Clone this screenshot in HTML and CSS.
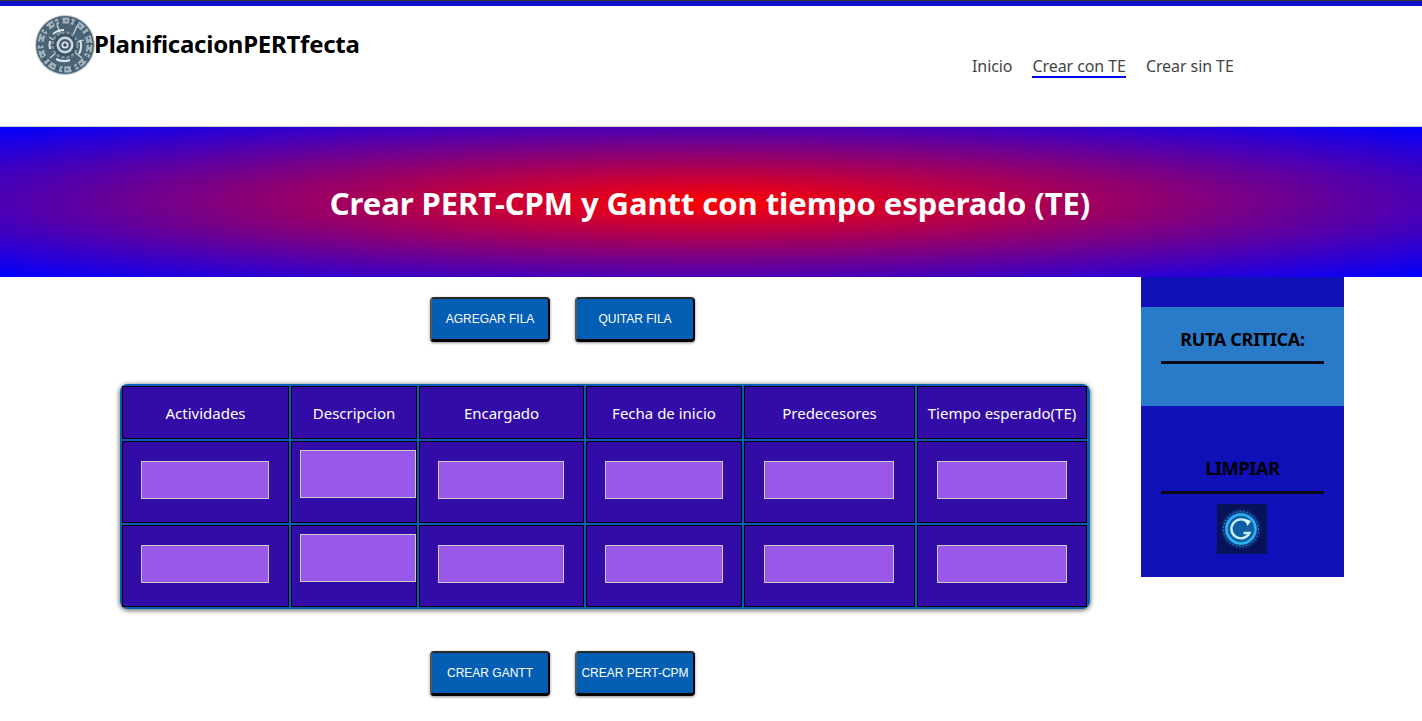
FILE: index.html
```html
<!DOCTYPE html>
<html lang="es">

<head>
    <meta charset="UTF-8">
    <meta name="viewport" content="width=device-width, initial-scale=1.0">
    <title>PlanificacionPERTfecta</title>
    <link rel="stylesheet" href="styles.css">
</head>

<body>
    <header class="site-header">
        <div class="brand">
            <svg class="brand-logo" viewBox="0 0 60 60" aria-hidden="true">
                <circle cx="30" cy="30" r="30" fill="#c3ced5"/>
                <circle cx="30" cy="30" r="29" fill="#4a6375"/>
                <circle cx="30" cy="30" r="24.5" fill="none" stroke="#9fb0bb" stroke-width="6" stroke-dasharray="7 2 3 4"/>
                <circle cx="30" cy="30" r="24.5" fill="none" stroke="#34505f" stroke-width="1.2" stroke-dasharray="2 3"/>
                <path d="M14 22l8 5M22 10l4 10M42 11l-4 9M49 25l-10 3M47 43l-9-7M15 43l8-7" stroke="#c9d4da" stroke-width="1.3" fill="none"/>
                <path d="M18 19a17 17 0 0 1 11-4M45 25a17 17 0 0 1-1 14M21 44a17 17 0 0 0 14 1M15 34a16 16 0 0 1 0-8" stroke="#dfe6ea" stroke-width="2" fill="none"/>
                <circle cx="30" cy="30" r="12.5" fill="#3c5364" stroke="#7f929f" stroke-width="2.5" stroke-dasharray="3 2"/>
                <circle cx="30" cy="30" r="8.5" fill="#cbd5da"/>
                <circle cx="30" cy="30" r="6" fill="#465e6f"/>
                <circle cx="30" cy="30" r="3.5" fill="#dfe5e8"/>
                <circle cx="30" cy="30" r="1.8" fill="#2f4454"/>
            </svg>
            <span class="brand-name">PlanificacionPERTfecta</span>
        </div>
        <nav class="main-nav">
            <a href="#">Inicio</a>
            <a href="#" class="active">Crear con TE</a>
            <a href="#">Crear sin TE</a>
        </nav>
    </header>

    <section class="banner">
        <h1>Crear PERT-CPM y Gantt con tiempo esperado (TE)</h1>
    </section>

    <div class="content">
        <main class="main-col">
            <div class="actions actions-top">
                <button class="btn">AGREGAR FILA</button>
                <button class="btn">QUITAR FILA</button>
            </div>

            <table class="pert-table">
                <colgroup>
                    <col class="col-act">
                    <col class="col-desc">
                    <col class="col-enc">
                    <col class="col-fecha">
                    <col class="col-pred">
                    <col class="col-te">
                </colgroup>
                <thead>
                    <tr>
                        <th>Actividades</th>
                        <th>Descripcion</th>
                        <th>Encargado</th>
                        <th>Fecha de inicio</th>
                        <th>Predecesores</th>
                        <th>Tiempo esperado(TE)</th>
                    </tr>
                </thead>
                <tbody>
                    <tr>
                        <td><input type="text" class="cell-input w-act"></td>
                        <td class="desc-cell"><textarea class="cell-area"></textarea></td>
                        <td><input type="text" class="cell-input w-enc"></td>
                        <td><input type="text" class="cell-input w-fecha"></td>
                        <td><input type="text" class="cell-input w-pred"></td>
                        <td><input type="text" class="cell-input w-te"></td>
                    </tr>
                    <tr>
                        <td><input type="text" class="cell-input w-act"></td>
                        <td class="desc-cell"><textarea class="cell-area"></textarea></td>
                        <td><input type="text" class="cell-input w-enc"></td>
                        <td><input type="text" class="cell-input w-fecha"></td>
                        <td><input type="text" class="cell-input w-pred"></td>
                        <td><input type="text" class="cell-input w-te"></td>
                    </tr>
                </tbody>
            </table>

            <div class="actions actions-bottom">
                <button class="btn">CREAR GANTT</button>
                <button class="btn">CREAR PERT-CPM</button>
            </div>
        </main>

        <aside class="side">
            <div class="side-block side-route">
                <h3>RUTA CRITICA:</h3>
                <hr>
            </div>
            <div class="side-block side-clear">
                <h3>LIMPIAR</h3>
                <hr>
                <svg class="clear-icon" viewBox="0 0 50 50" aria-hidden="true">
                    <defs>
                        <radialGradient id="glow">
                            <stop offset="0" stop-color="#0f6fb8"/>
                            <stop offset="0.7" stop-color="#0c4f9c"/>
                            <stop offset="1" stop-color="#07125a"/>
                        </radialGradient>
                    </defs>
                    <rect width="50" height="50" fill="#07125a"/>
                    <circle cx="24" cy="25" r="21" fill="url(#glow)"/>
                    <circle cx="24" cy="25" r="17.5" fill="none" stroke="#8fc0df" stroke-width="0.8" stroke-dasharray="1 2.5"/>
                    <circle cx="24" cy="25" r="14.5" fill="#0e5fa4" stroke="#2db4f0" stroke-width="2.5"/>
                    <path d="M31 18.5a9.5 9.5 0 1 0 1.5 10.5h-6" fill="none" stroke="#c8effc" stroke-width="2.4"/>
                    <path d="M27 14.5l7 2.5-3.5 5z" fill="#e4f8ff"/>
                </svg>
            </div>
        </aside>
    </div>
</body>

</html>
```

FILE: styles.css
```css
/* PlanificacionPERTfecta */
body {
    margin: 0;
    background-color: white;
    color: black;
    font-family: "Noto Sans", "Open Sans", sans-serif;
}

.site-header {
    display: flex;
    height: 120px;
    border-top: 1px solid #333;
    border-bottom: 1px solid #ccc;
    box-shadow: inset 0 5px 0 #1010c4;
    padding-bottom: 5px;
}

.brand {
    display: flex;
    align-items: flex-start;
    width: 970px;
    padding: 14px 0 0 35px;
    box-sizing: border-box;
}

.brand-logo {
    width: 60px;
    height: 60px;
    flex: none;
}

.brand-name {
    font-size: 24px;
    font-weight: bold;
    line-height: 32px;
    letter-spacing: -0.26px;
    margin: 13px 0 0 -1px;
}

.main-nav {
    display: flex;
    align-items: flex-start;
    gap: 20px;
    padding: 54px 0 0 2px;
}

.main-nav a {
    color: #444;
    font-size: 16px;
    line-height: 22px;
    letter-spacing: -0.08px;
    text-decoration: none;
    border-bottom: 2px solid transparent;
    height: 21px;
}

.main-nav a.active {
    border-bottom-color: #0000ee;
}

.banner {
    display: flex;
    align-items: center;
    justify-content: center;
    height: 150px;
    padding-right: 2px;
    box-sizing: border-box;
    background: radial-gradient(ellipse at center, #ff0000, #0000ff);
    color: white;
}

.banner h1 {
    margin: 2px 0 0;
    font-size: 31px;
    font-weight: bold;
    letter-spacing: -0.06px;
}

.content {
    display: flex;
}

.main-col {
    width: 1141px;
    flex: none;
}

.actions {
    display: flex;
    gap: 25px;
    padding-left: 430px;
}

.actions-top {
    padding-top: 20px;
}

.actions-bottom {
    padding-top: 42px;
    padding-bottom: 25px;
}

.btn {
    width: 120px;
    height: 45px;
    padding: 0 0 1px;
    box-sizing: border-box;
    background-color: #045fb4;
    color: white;
    border-style: solid;
    border-width: 2px 2px 3px 2px;
    border-color: #2a2a2a #000 #000 #555;
    border-radius: 4px;
    box-shadow: 0 1px 3px rgba(0, 0, 0, 0.45);
    font-family: "Liberation Sans", Arial, sans-serif;
    font-size: 12px;
    cursor: pointer;
}

.pert-table {
    width: 970px;
    margin: 42px 0 0 120px;
    padding: 0 1px 0 0;
    border-collapse: separate;
    border-spacing: 2px;
    table-layout: fixed;
    background-color: #045fb4;
    border-radius: 8px;
    box-shadow: 0 1px 4px 1px rgba(0, 0, 0, 0.5);
    color: white;
}

.col-act { width: 167px; }
.col-desc { width: 126px; }
.col-enc { width: 165px; }
.col-fecha { width: 156px; }
.col-pred { width: 171px; }
.col-te { width: 170px; }

.pert-table th,
.pert-table td {
    padding: 0;
    background-color: #330ca8;
    border: 1px solid black;
    text-align: center;
}

.pert-table th {
    height: 51px;
    font-size: 15px;
    font-weight: normal;
}

.pert-table td {
    height: 80px;
}

.cell-input,
.cell-area {
    display: block;
    height: 38px;
    margin: 0 auto 4px;
    padding: 0;
    box-sizing: border-box;
    background-color: #9a58ea;
    border: 1px solid #ccc;
    border-radius: 0;
}

.w-act { width: 128px; margin-left: 18px; }
.w-enc { width: 126px; margin-left: 18px; }
.w-fecha { width: 118px; }
.w-pred { width: 130px; margin-left: 19px; }
.w-te { width: 130px; }

.desc-cell {
    vertical-align: top;
}

.cell-area {
    width: 116px;
    height: 48px;
    margin: 8px 0 0 8px;
    resize: none;
}

.side {
    width: 203px;
    height: 300px;
    background-color: #1010b8;
    text-align: center;
}

.side-block {
    padding: 0 20px;
}

.side-block h3 {
    margin: 0;
    font-size: 18px;
    font-weight: bold;
    line-height: 24px;
    letter-spacing: -0.3px;
}

.side-block hr {
    margin: 11px 0 0;
    height: 3px;
    background-color: #0a0a14;
    border: none;
}

.side-route {
    margin-top: 30px;
    height: 99px;
    padding-top: 20px;
    box-sizing: border-box;
    background-color: #2a7aca;
}

.side-route hr {
    margin-top: 10px;
}

.side-clear {
    padding-top: 50px;
}

.clear-icon {
    display: block;
    width: 50px;
    height: 50px;
    margin: 10px 0 0 56px;
}
```
